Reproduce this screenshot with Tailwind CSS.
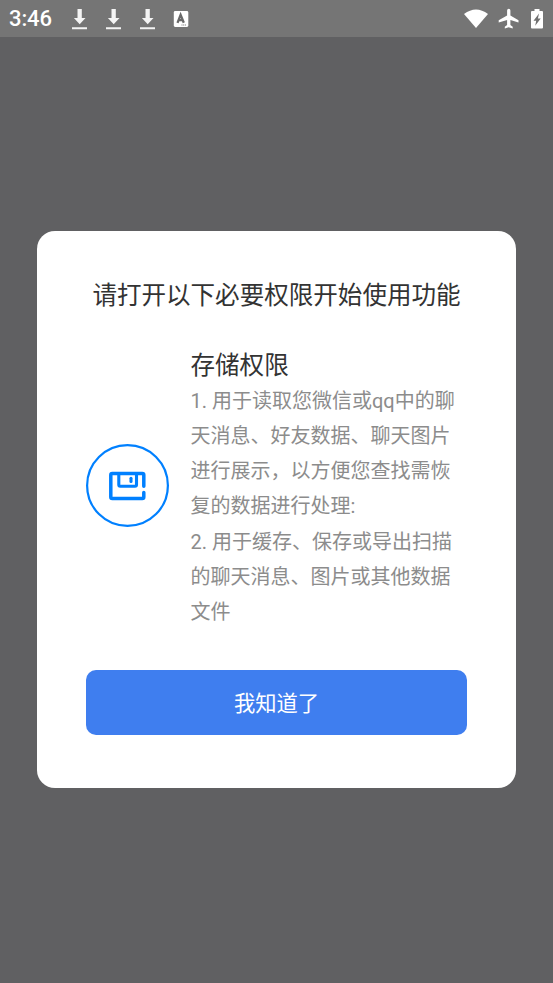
<!DOCTYPE html>
<html lang="zh-CN">
<head>
<meta charset="utf-8">
<title>权限说明</title>
<script src="https://cdn.jsdelivr.net/npm/@tailwindcss/browser@4"></script>
</head>
<body class="flex h-[983px] w-[553px] flex-col overflow-hidden bg-[#606062] font-[Roboto,'Noto_Sans_CJK_SC',sans-serif]">
<header class="flex h-[37px] shrink-0 items-center justify-between bg-[#757575] pl-[9px] pr-[10px] text-white">
  <div class="flex items-center">
    <span class="w-[62px] pt-px text-[22px] font-medium leading-[36px] tracking-[-0.1px]">3:46</span>
    <div class="flex items-center gap-[18px]">
      <svg class="h-[22px] w-4" viewBox="0 0 16 22" fill="#f4f4f4"><path d="M6.500 1h4.300v9h3.700L8.700 16.200 2.900 10h3.600zM1 19.300h15v2H1z"/></svg>
      <svg class="h-[22px] w-4" viewBox="0 0 16 22" fill="#f4f4f4"><path d="M6.500 1h4.300v9h3.700L8.700 16.200 2.900 10h3.600zM1 19.300h15v2H1z"/></svg>
      <svg class="h-[22px] w-4" viewBox="0 0 16 22" fill="#f4f4f4"><path d="M6.500 1h4.300v9h3.700L8.700 16.200 2.900 10h3.600zM1 19.300h15v2H1z"/></svg>
      <svg class="h-[22px] w-4" viewBox="0 0 16 22"><rect x=".8" y="3" width="14.500" height="16" rx="1.400" fill="#fff"/><path d="M4.500 14.800 7.600 6.800 10.800 14.800M5.500 12.200h4.300" fill="none" stroke="#686868" stroke-width="2.300"/><path d="M8.500 17h5" stroke="#777" stroke-width="1" stroke-dasharray="1 .7"/></svg>
    </div>
  </div>
  <div class="flex items-center">
    <svg class="h-[22px] w-6" viewBox="0 0 24 22" fill="#fff"><path d="M0 6Q12-3.200 24 6L12 20z"/></svg>
    <svg class="ml-[9.5px] h-[22px] w-[21px]" viewBox="0 0 21 22" fill="#fff"><path d="M20.500 14.500v-2.200L12.400 7.400V2.500a1.650 1.650 0 0 0-3.300 0v4.900L.7 12.300v2.200l8.400-2.500v5.100L6.800 18.800v1.700l3.900-1.200 4 1.200v-1.700l-2.300-1.700V12z"/></svg>
    <svg class="ml-[12.5px] h-[22px] w-3" viewBox="0 0 12 22"><path d="M3.500 1h5v2H11q1 0 1 1v15.500q0 1-1 1H1q-1 0-1-1V4q0-1 1-1h2.500z" fill="#fff"/><path d="M8 5.500 2.500 12.700h2.700l-1 5 5.500-7.100H6.900z" fill="#707070"/></svg>
  </div>
</header>
<main class="mx-[37px] mt-[194px] h-[557.3px] shrink-0 rounded-[18px] bg-white px-[49px] pt-[48px]">
  <h1 class="h-[34px] whitespace-nowrap text-center text-[24.55px] leading-[34px] text-[#333]">请打开以下必要权限开始使用功能</h1>
  <section class="mt-[36px] flex h-[282px] items-center">
    <svg class="mt-[-9px] h-[84px] w-[84px] shrink-0" viewBox="0 0 84 84" fill="none" stroke="#0080ff"><circle cx="41.500" cy="41.500" r="40.400" stroke-width="2.200"/><g stroke-width="3.500" stroke-linecap="round" stroke-linejoin="round"><path d="M57.800 42.200V31q0-1.500-1.500-1.500H26.300q-1.500 0-1.500 1.500v22q0 1.500 1.500 1.500h30q1.500 0 1.500-1.500v-4.500"/><path d="M32.800 29.500v11.200q0 1.500 1.500 1.500h14.700q1.500 0 1.500-1.500v-11.200" stroke-width="3.100"/><path d="M45 34.200v3.200" stroke-width="3.100"/></g></svg>
    <div class="ml-[20.5px] h-full whitespace-nowrap">
      <h2 class="h-[34.600px] text-[24.55px] leading-[34px] text-[#333]">存储权限</h2>
      <p class="text-[20px] leading-[35.300px] text-[#8c8c8c]">1. 用于读取您微信或qq中的聊<br>天消息、好友数据、聊天图片<br>进行展示，以方便您查找需恢<br>复的数据进行处理:<br>2. 用于缓存、保存或导出扫描<br>的聊天消息、图片或其他数据<br>文件</p>
    </div>
  </section>
  <button class="mt-[39px] block h-[65px] w-full rounded-[10px] bg-[#3f7eef] pt-0.5 text-[21.300px] leading-[63px] text-white">我知道了</button>
</main>
</body>
</html>
